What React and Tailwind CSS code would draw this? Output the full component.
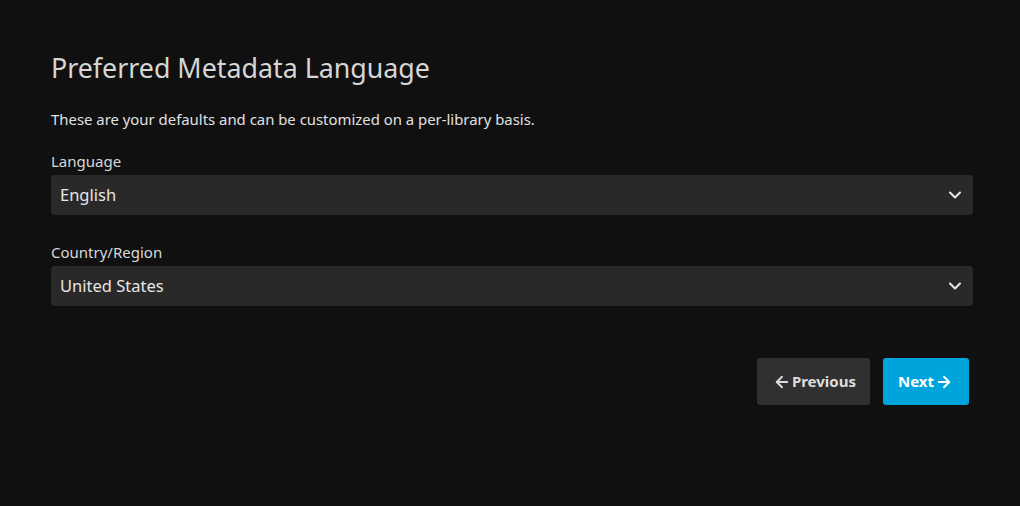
import React from 'react'
import { ArrowLeft, ArrowRight, ChevronDown } from 'lucide-react'

const SelectField = ({ label, value, last }) => (
  <div className={last ? '' : 'mb-[27px]'}>
    <label className="block text-[15px] leading-[20px] text-[#d8d8d8] mb-[4px]">{label}</label>
    <div className="flex items-center justify-between h-[40px] rounded-[4px] bg-[#292929] pl-[9px] pr-[8px]">
      <span className="text-[16.5px] text-[#e6e6e6]">{value}</span>
      <ChevronDown className="h-[20px] w-[20px] text-[#e6e6e6]" strokeWidth={2.5} />
    </div>
  </div>
)

const App = () => {
  return (
    <div
      className="min-h-[506px] w-full bg-[#101010] text-[#dddddd]"
      style={{ fontFamily: '"Noto Sans", sans-serif' }}
    >
      <div className="w-[922px] ml-[51px] pt-[50px]">
        <h1 className="text-[26.8px] leading-[36px] font-normal text-[#d6d6d6]">Preferred Metadata Language</h1>
        <p className="mt-[23px] text-[14.9px] leading-[20px] text-[#e0e0e0]">
          These are your defaults and can be customized on a per-library basis.
        </p>
        <div className="mt-[22px]">
          <SelectField label="Language" value="English" />
          <SelectField label="Country/Region" value="United States" last />
        </div>
        <div className="flex justify-end gap-[13px] pr-[4px] mt-[52px]">
          <button className="flex items-center h-[47px] pl-[16px] pr-[14px] rounded-[3px] bg-[#303030] text-[15px] font-bold text-[#dddddd]">
            <ArrowLeft className="h-[18px] w-[18px] mr-[1px]" strokeWidth={2.5} />
            Previous
          </button>
          <button className="flex items-center h-[47px] pl-[15px] pr-[16px] rounded-[3px] bg-[#00a4dc] text-[15px] font-bold text-white">
            Next
            <ArrowRight className="h-[18px] w-[18px] ml-[1px]" strokeWidth={2.5} />
          </button>
        </div>
      </div>
    </div>
  )
}

export default App
